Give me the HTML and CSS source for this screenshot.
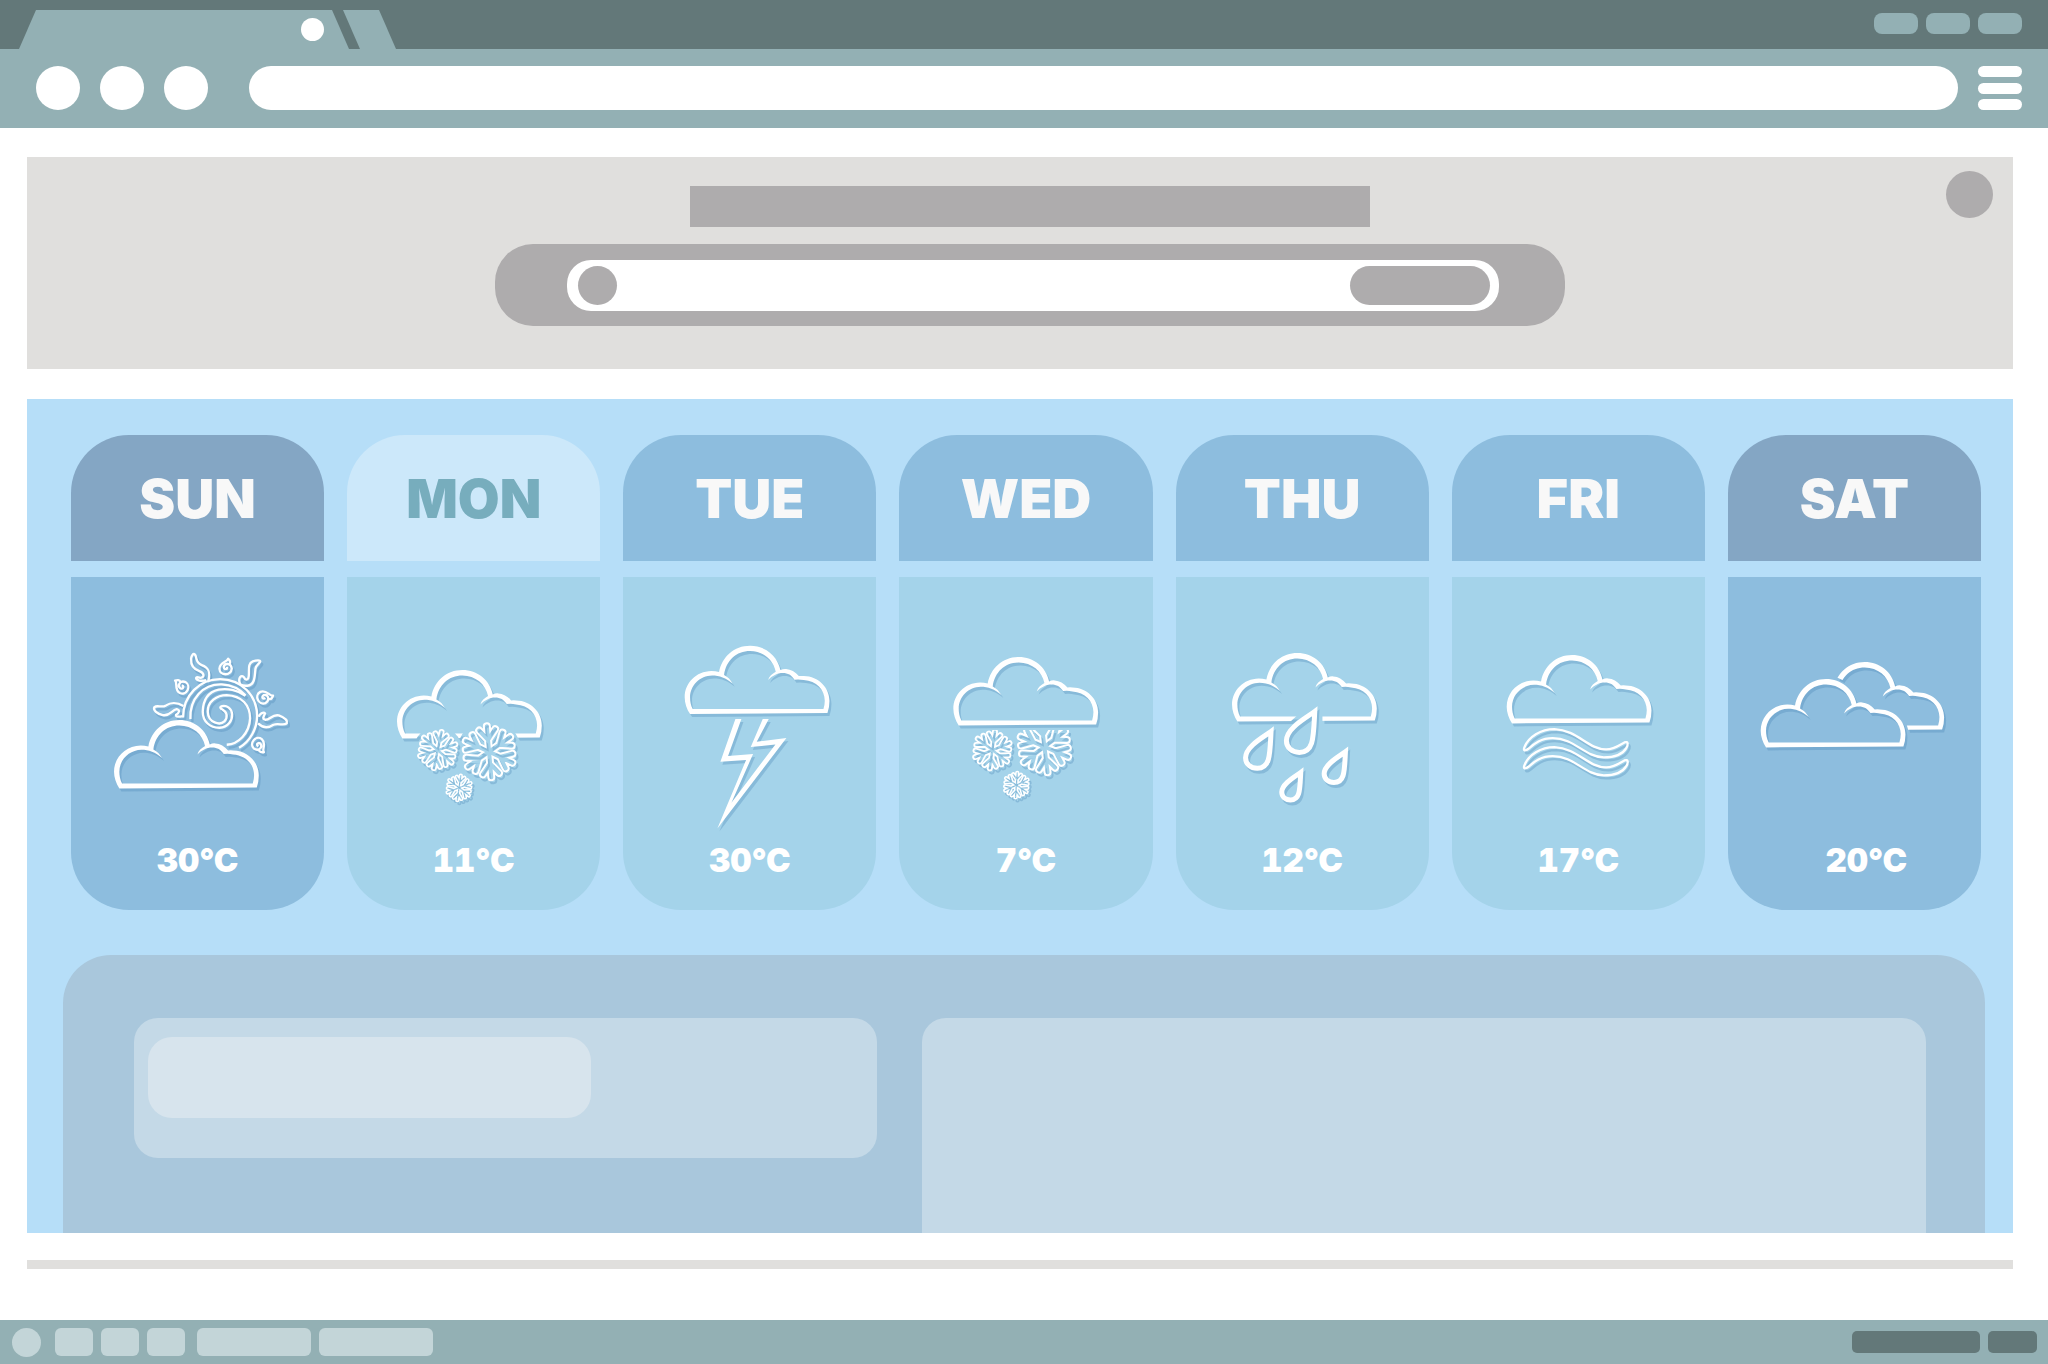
FILE: index.html
```
<!DOCTYPE html>
<html lang="en">

<head>
    <meta charset="UTF-8">
    <meta name="viewport" content="width=device-width, initial-scale=1.0">
    <title>Weather</title>
    <link rel="stylesheet" href="styles.css">
</head>

<body>
    <!-- shared shapes for the weather icons -->
    <svg class="shapes" width="0" height="0" aria-hidden="true">
        <defs>
            <path id="cloud" fill-rule="evenodd" d="M16 205 C6 190 0 172 0 155 C0 112 34 77 80 76 Q92 76 103 79 C112 33 148 0 196 0 C241 0 278 30 287 73 Q296 69 304 70 C318 71 332 78 342 91 Q350 90 357 91 C402 92 434 126 434 166 Q434 186 428 202 Z
                M24 190 C18 178 16 166 16 155 C16 118 46 90 82 89 C104 89 124 96 144 114 C137 102 130 94 118 88 C124 44 155 16 196 16 C235 16 266 42 273 78 C262 84 253 92 250 103 C262 90 278 82 294 82 C310 82 320 88 329 102 Q342 100 357 103 C395 106 420 132 420 165 Q420 178 416 190 Z" />
            <path id="cloud-body" d="M16 205 C6 190 0 172 0 155 C0 112 34 77 80 76 Q92 76 103 79 C112 33 148 0 196 0 C241 0 278 30 287 73 Q296 69 304 70 C318 71 332 78 342 91 Q350 90 357 91 C402 92 434 126 434 166 Q434 186 428 202 Z" />
            <path id="arm" d="M0 0 V-77 M0 -36 L-24 -66 M0 -36 L24 -66" />
            <g id="flake-lines">
                <use href="#arm" />
                <use href="#arm" transform="rotate(60)" />
                <use href="#arm" transform="rotate(120)" />
                <use href="#arm" transform="rotate(180)" />
                <use href="#arm" transform="rotate(240)" />
                <use href="#arm" transform="rotate(300)" />
            </g>
            <mask id="flake-l">
                <use href="#flake-lines" class="arm" stroke="#fff" stroke-width="24" />
                <use href="#flake-lines" class="arm" stroke="#000" stroke-width="12" />
            </mask>
            <mask id="flake-m">
                <use href="#flake-lines" class="arm" stroke="#fff" stroke-width="25" />
                <use href="#flake-lines" class="arm" stroke="#000" stroke-width="10" />
            </mask>
            <mask id="flake-s">
                <use href="#flake-lines" class="arm" stroke="#fff" stroke-width="27" />
                <use href="#flake-lines" class="arm" stroke="#000" stroke-width="8" />
            </mask>
            <rect id="snow-l" x="-100" y="-100" width="200" height="200" mask="url(#flake-l)" />
            <rect id="snow-m" x="-100" y="-100" width="200" height="200" mask="url(#flake-m)" />
            <rect id="snow-s" x="-100" y="-100" width="200" height="200" mask="url(#flake-s)" />
            <path id="drop" class="thick" d="M0 0 C-24 18 -85 50 -85 88 C-85 109 -68 123 -46 123 C-2 123 -4 76 0 0 Z" />
            <path id="curl" class="thin" d="M12 -12 C17 -17 13 -24 8 -28 C7 -18 -18 -18 -18 2 C-17 24 17 24 19 2 C17 -16 -3 -16 -5 -3 C-3 7 7 4 5 -4" />
            <path id="wave" class="thin" d="M250 532 C262 500 300 477 340 477 C410 480 440 538 495 538 C520 538 535 525 550 517 C562 512 562 525 555 535 C543 555 520 562 488 562 C430 560 400 504 335 504 C300 504 280 520 262 536 C252 544 246 542 250 532 Z" />
        </defs>
    </svg>

    <header class="browser">
        <div class="tabs">
            <div class="tab">
                <button class="tab_close" aria-label="Close tab"></button>
            </div>
            <button class="tab_new" aria-label="New tab"></button>
            <div class="window_btns">
                <button class="window_btn" aria-label="Minimize"></button>
                <button class="window_btn" aria-label="Maximize"></button>
                <button class="window_btn" aria-label="Close"></button>
            </div>
        </div>
        <div class="toolbar">
            <div class="nav_btns">
                <button class="nav_btn" aria-label="Back"></button>
                <button class="nav_btn" aria-label="Forward"></button>
                <button class="nav_btn" aria-label="Reload"></button>
            </div>
            <input class="address" type="text" aria-label="Address">
            <button class="menu" aria-label="Menu">
                <span class="menu_line"></span>
                <span class="menu_line"></span>
                <span class="menu_line"></span>
            </button>
        </div>
    </header>

    <main class="page">
        <section class="banner">
            <div class="banner_content">
                <div class="banner_title"></div>
                <form class="search">
                    <div class="search_field">
                        <span class="search_dot"></span>
                        <input class="search_input" type="text" aria-label="Search city">
                        <button class="search_btn" type="button" aria-label="Search"></button>
                    </div>
                </form>
            </div>
            <button class="profile" aria-label="Profile"></button>
        </section>

        <section class="weather">
            <ul class="days">
                <li class="day day_weekend">
                    <h2 class="day_name">SUN</h2>
                    <div class="day_body">
                        <svg class="icon" viewBox="33 21 759 780" aria-hidden="true">
                            <mask id="behind-sun" maskUnits="userSpaceOnUse" x="0" y="0" width="800" height="800">
                                <rect width="800" height="800" fill="#fff" />
                                <use href="#cloud-body" x="162" y="450" stroke="#000" stroke-width="8" />
                            </mask>
                            <g mask="url(#behind-sun)">
                                <path class="thin" d="M369 442 C369 375 420 327 480 327 C545 327 591 378 591 437 C591 475 570 515 537 533" />
                                <path class="thin" d="M391 447 C388 385 430 341 485 343 C515 345 540 358 556 376" />
                                <path class="thin" d="M556 377 C510 345 430 345 428 425 C428 455 450 473 478 473 C505 472 517 450 516 432 C515 415 500 405 486 408 C478 410 480 416 487 418 C500 425 505 440 493 454 C480 466 445 460 443 425 C442 395 470 375 500 375 C545 377 570 405 570 445 C568 490 535 522 500 524" />
                                <path class="thin" d="M445 332 C452 305 445 292 425 285 C405 278 412 265 405 254 C400 248 394 256 393 266 C392 288 402 298 418 303 C432 308 434 320 424 323 C416 325 410 318 408 324 C408 332 425 334 438 330" />
                                <path class="thin" d="M540 342 C532 322 545 312 552 322 C556 334 566 328 566 318 C568 300 562 280 578 274 C590 270 602 270 600 275 C596 284 588 284 586 296 C584 320 584 345 562 347 C550 348 545 346 540 342" />
                                <path class="thin" d="M370 408 C350 395 330 398 318 406 C304 414 292 404 283 411 C278 420 292 432 308 435 C328 440 335 420 350 417 C362 420 356 430 348 434 C345 442 360 440 366 438" />
                                <path class="thin" d="M594 460 C610 476 625 474 640 464 C655 458 670 468 680 460 C683 450 672 442 656 436 C635 432 630 450 615 449 C604 446 612 438 615 430 C610 424 598 432 596 440" />
                                <use href="#curl" transform="translate(496 294)" />
                                <use href="#curl" transform="translate(366 352) rotate(-62)" />
                                <use href="#curl" transform="translate(610 381) rotate(65)" />
                                <use href="#curl" transform="translate(595 522) rotate(130)" />
                            </g>
                            <use href="#cloud" x="162" y="450" />
                        </svg>
                        <p class="temp">30°C</p>
                    </div>
                </li>
                <li class="day day_today">
                    <h2 class="day_name">MON</h2>
                    <div class="day_body">
                        <svg class="icon" viewBox="21 21 759 780" aria-hidden="true">
                            <mask id="behind-snow" maskUnits="userSpaceOnUse" x="0" y="0" width="800" height="800">
                                <rect width="800" height="800" fill="#fff" />
                                <circle cx="293" cy="540" r="72" />
                                <circle cx="447" cy="545" r="96" />
                            </mask>
                            <g mask="url(#behind-snow)">
                                <use href="#cloud" x="171" y="300" />
                            </g>
                            <use href="#snow-m" transform="translate(293 540) rotate(12) scale(.72)" />
                            <use href="#snow-l" transform="translate(447 545) rotate(-5)" />
                            <use href="#snow-s" transform="translate(357 653) rotate(8) scale(.48)" />
                        </svg>
                        <p class="temp">11°C</p>
                    </div>
                </li>
                <li class="day">
                    <h2 class="day_name">TUE</h2>
                    <div class="day_body">
                        <svg class="icon" viewBox="12 21 759 780" aria-hidden="true">
                            <use href="#cloud" x="197" y="227" />
                            <path d="M349 447 L304 575 L381 570 L295 775 L502 504 L413 515 L449 447 L431 447 L395 531 L469 523 L337 698 L402 552 L327 558 L367 447 Z" />
                        </svg>
                        <p class="temp">30°C</p>
                    </div>
                </li>
                <li class="day">
                    <h2 class="day_name">WED</h2>
                    <div class="day_body">
                        <svg class="icon" viewBox="27 21 759 780" aria-hidden="true">
                            <clipPath id="below-cloud">
                                <rect x="200" y="480" width="400" height="240" />
                            </clipPath>
                            <use href="#cloud" x="190" y="261" />
                            <g clip-path="url(#below-cloud)">
                                <use href="#snow-m" transform="translate(307 540) rotate(8) scale(.72)" />
                                <use href="#snow-l" transform="translate(463 530) rotate(-7)" />
                                <use href="#snow-s" transform="translate(379 645) rotate(4) scale(.48)" />
                            </g>
                        </svg>
                        <p class="temp">7°C</p>
                    </div>
                </li>
                <li class="day">
                    <h2 class="day_name">THU</h2>
                    <div class="day_body">
                        <svg class="icon" viewBox="18 21 759 780" aria-hidden="true">
                            <mask id="behind-drop" maskUnits="userSpaceOnUse" x="0" y="0" width="800" height="800">
                                <rect width="800" height="800" fill="#fff" />
                                <path d="M388 430 H457 V470 H344 Z" />
                            </mask>
                            <g mask="url(#behind-drop)">
                                <use href="#cloud" x="186" y="249" />
                            </g>
                            <use href="#drop" transform="translate(434 424)" />
                            <use href="#drop" transform="translate(303 484) scale(.9)" />
                            <use href="#drop" transform="translate(526 545) scale(.75)" />
                            <use href="#drop" transform="translate(392 607) scale(.67)" />
                        </svg>
                        <p class="temp">12°C</p>
                    </div>
                </li>
                <li class="day">
                    <h2 class="day_name">FRI</h2>
                    <div class="day_body">
                        <svg class="icon" viewBox="33 21 759 780" aria-hidden="true">
                            <use href="#cloud" x="197" y="255" />
                            <use href="#wave" />
                            <use href="#wave" y="54" />
                        </svg>
                        <p class="temp">17°C</p>
                    </div>
                </li>
                <li class="day day_weekend">
                    <h2 class="day_name">SAT</h2>
                    <div class="day_body">
                        <svg class="icon" viewBox="22 21 759 780" aria-hidden="true">
                            <mask id="behind-cloud" maskUnits="userSpaceOnUse" x="0" y="0" width="800" height="800">
                                <rect width="800" height="800" fill="#fff" />
                                <use href="#cloud-body" x="120" y="327" stroke="#000" stroke-width="18" />
                            </mask>
                            <g mask="url(#behind-cloud)">
                                <use href="#cloud" x="236" y="276" />
                            </g>
                            <use href="#cloud" x="120" y="327" />
                        </svg>
                        <p class="temp temp_right">20°C</p>
                    </div>
                </li>
            </ul>

            <div class="details">
                <div class="details_left">
                    <div class="details_label"></div>
                </div>
                <div class="details_right"></div>
            </div>
        </section>

        <hr class="line">
    </main>

    <footer class="taskbar">
        <button class="start" aria-label="Start"></button>
        <div class="apps">
            <button class="app" aria-label="App 1"></button>
            <button class="app" aria-label="App 2"></button>
            <button class="app" aria-label="App 3"></button>
        </div>
        <div class="opened">
            <button class="opened_app" aria-label="Window 1"></button>
            <button class="opened_app" aria-label="Window 2"></button>
        </div>
        <div class="tray">
            <button class="tray_btn tray_wide" aria-label="Notifications"></button>
            <button class="tray_btn" aria-label="Clock"></button>
        </div>
    </footer>
</body>

</html>
```
FILE: styles.css
```
* {
    margin: 0;
    padding: 0;
    box-sizing: border-box;
}

body {
    min-height: 100vh;
    display: flex;
    flex-direction: column;
    background-color: white;
    font-family: Inter, "Liberation Sans", sans-serif;
}

button,
input {
    border: none;
    font: inherit;
}

button {
    cursor: pointer;
}

.shapes {
    position: absolute;
}

/* browser */
.tabs {
    display: flex;
    height: 49px;
    padding: 10px 26px 0 19px;
    background-color: #637879;
}

.tab {
    display: flex;
    justify-content: flex-end;
    width: 330px;
    padding: 8px 25px;
    background-color: #93b0b4;
    clip-path: polygon(17px 0, calc(100% - 17px) 0, 100% 100%, 0 100%);
}

.tab_close {
    width: 23px;
    height: 23px;
    border-radius: 50%;
    background-color: white;
}

.tab_new {
    width: 53px;
    margin-left: -6px;
    background-color: #93b0b4;
    clip-path: polygon(0 0, 36px 0, 100% 100%, 17px 100%);
}

.window_btns {
    display: flex;
    gap: 8px;
    margin-left: auto;
    padding-top: 3px;
}

.window_btn {
    width: 44px;
    height: 21px;
    border-radius: 8px;
    background-color: #93b0b4;
}

.toolbar {
    display: flex;
    gap: 20px;
    padding: 17px 26px 18px 36px;
    background-color: #93b0b4;
}

.nav_btns {
    display: flex;
    gap: 20px;
    margin-right: 21px;
}

.nav_btn {
    width: 44px;
    height: 44px;
    border-radius: 50%;
    background-color: white;
}

.address {
    flex: 1;
    min-width: 0;
    height: 44px;
    padding: 0 20px;
    border-radius: 22px;
    font-size: 20px;
    background-color: white;
}

.menu {
    display: flex;
    flex-direction: column;
    justify-content: space-between;
    width: 44px;
    height: 44px;
    background: none;
}

.menu_line {
    width: 100%;
    height: 11px;
    border-radius: 6px;
    background-color: white;
}

/* page */
.page {
    flex: 1;
    display: flex;
    flex-direction: column;
    padding: 29px 35px 51px 27px;
}

.banner {
    display: flex;
    padding: 14px 20px 43px 86px;
    background-color: #e0dfdd;
}

.banner_content {
    flex: 1;
    display: flex;
    flex-direction: column;
    align-items: center;
    gap: 17px;
    padding-top: 15px;
}

.banner_title {
    width: 100%;
    max-width: 680px;
    height: 41px;
    background-color: #aeacad;
}

.search {
    width: 100%;
    max-width: 1070px;
    padding: 16px 66px 15px 72px;
    border-radius: 38px;
    background-color: #aeacad;
}

.search_field {
    display: flex;
    align-items: center;
    height: 51px;
    padding: 0 9px 0 11px;
    border-radius: 24px;
    background-color: white;
}

.search_dot {
    width: 39px;
    height: 39px;
    border-radius: 50%;
    background-color: #aeacad;
}

.search_input {
    flex: 1;
    min-width: 0;
    height: 39px;
    padding: 0 12px;
    font-size: 20px;
    background: none;
}

.search_btn {
    width: 140px;
    height: 39px;
    border-radius: 20px;
    background-color: #aeacad;
}

.profile {
    width: 47px;
    height: 47px;
    border-radius: 50%;
    background-color: #aeacad;
}

/* weather */
.weather {
    flex: 1;
    display: flex;
    flex-direction: column;
    margin-top: 30px;
    padding-top: 36px;
    background-color: #b6def8;
}

.days {
    display: grid;
    grid-template-columns: repeat(7, 1fr);
    gap: 23px;
    padding: 0 32px 0 44px;
    list-style: none;
}

.day_name {
    display: flex;
    justify-content: center;
    align-items: center;
    height: 126px;
    border-radius: 58px 58px 0 0;
    font-size: 54px;
    font-weight: 900;
    font-optical-sizing: none;
    color: #f8f8f8;
    background-color: #8dbdde;
}

.day_body {
    margin-top: 16px;
    padding-bottom: 27px;
    border-radius: 0 0 58px 58px;
    background-color: #a4d3ea;
}

.day_weekend .day_name {
    background-color: #84a6c4;
}

.day_weekend .day_body {
    background-color: #8dbdde;
}

.day_today .day_name {
    color: #77adbd;
    background-color: #cce8fa;
}

.temp {
    font-size: 33px;
    font-weight: 900;
    font-variant-numeric: tabular-nums;
    line-height: 46px;
    text-align: center;
    color: white;
}

.temp_right {
    padding-left: 24px;
}

.icon {
    display: block;
    width: 100%;
    fill: white;
    filter: drop-shadow(2px 3px 0 rgba(70, 130, 180, 0.3));
}

.thin {
    fill: none;
    stroke: white;
    stroke-width: 7;
    stroke-linejoin: round;
}

.thick {
    fill: none;
    stroke: white;
    stroke-width: 5;
    stroke-miterlimit: 10;
    vector-effect: non-scaling-stroke;
}

.arm {
    fill: none;
    stroke-linecap: round;
    stroke-linejoin: round;
}

.icon mask {
    fill: black;
}

/* details */
.details {
    flex: 1;
    display: grid;
    grid-template-columns: 743fr 1004fr;
    gap: 45px;
    margin: 45px 28px 0 36px;
    padding: 63px 59px 0 71px;
    border-radius: 48px 48px 0 0;
    background-color: #a9c7dc;
}

.details_left {
    align-self: start;
    padding: 19px 14px 40px;
    border-radius: 24px;
    background-color: #c4d9e7;
}

.details_label {
    width: 62%;
    height: 81px;
    border-radius: 24px;
    background-color: #d7e4ed;
}

.details_right {
    border-radius: 24px 24px 0 0;
    background-color: #c4d9e7;
}

.line {
    height: 9px;
    margin-top: 27px;
    border: none;
    background-color: #e0dfdd;
}

/* taskbar */
.taskbar {
    display: flex;
    align-items: center;
    height: 44px;
    padding: 0 11px 0 12px;
    background-color: #93b0b4;
}

.start {
    width: 29px;
    height: 29px;
    border-radius: 50%;
    background-color: #c3d5d8;
}

.apps {
    display: flex;
    gap: 8px;
    margin: 0 12px 0 14px;
}

.app {
    width: 38px;
    height: 28px;
    border-radius: 6px;
    background-color: #c3d5d8;
}

.opened {
    display: flex;
    gap: 8px;
}

.opened_app {
    width: 114px;
    height: 28px;
    border-radius: 6px;
    background-color: #c3d5d8;
}

.tray {
    display: flex;
    gap: 8px;
    margin-left: auto;
}

.tray_btn {
    width: 49px;
    height: 22px;
    border-radius: 5px;
    background-color: #637879;
}

.tray_wide {
    width: 128px;
}
```
